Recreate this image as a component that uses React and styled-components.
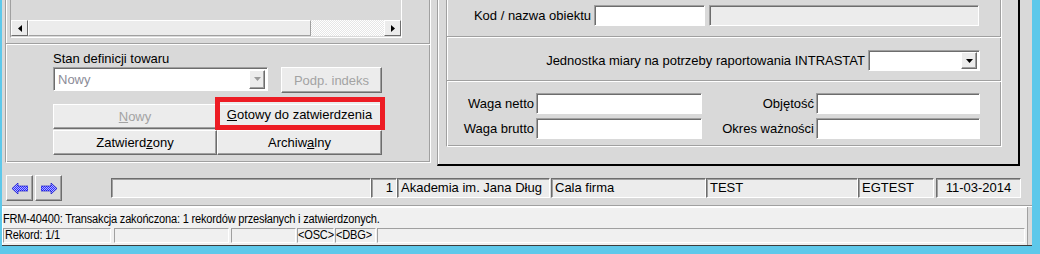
import styled, { createGlobalStyle } from "styled-components";

const GlobalStyle = createGlobalStyle`
  html, body { margin: 0; padding: 0; background: #5ec8ea; }
  body { font-family: "Liberation Sans", Arial, sans-serif; color: #000; }
`;

const Screen = styled.div`
  width: 1040px;
  height: 254px;
  background: #5ec8ea;
  padding-left: 2px;
  box-sizing: border-box;
  overflow: hidden;
`;

const Win = styled.div`
  width: 1030px;
  height: 246px;
  background: #d9d9d9;
  border-bottom: 1px solid #3c3c3c;
  box-sizing: border-box;
  display: flex;
  flex-direction: column;
`;

const Main = styled.div`
  display: flex;
  height: 166px;
  padding-left: 3px;
`;

/* ---------- left panel ---------- */

const LeftPanel = styled.div`
  width: 426px;
  height: 163px;
  box-sizing: border-box;
  border-left: 1px solid #a0a0a0;
  border-right: 1px solid #fff;
  border-bottom: 1px solid #fff;
  box-shadow: inset 1px 0 #fff, inset -1px -1px #a0a0a0;
  display: flex;
  flex-direction: column;
`;

const ListBox = styled.div`
  margin-left: 4px;
  width: 392px;
  height: 38px;
  box-sizing: border-box;
  border-left: 1px solid #a0a0a0;
  border-right: 1px solid #fff;
  border-bottom: 1px solid #fff;
  display: flex;
  flex-direction: column;
  justify-content: flex-end;
`;

const HScroll = styled.div`
  display: flex;
  height: 16px;
  margin-bottom: 1px;
`;

const ScrollBtn = styled.div`
  width: 17px;
  height: 16px;
  box-sizing: border-box;
  background: #ececec;
  border: 1px solid;
  border-color: #fff #6d6d6d #6d6d6d #fff;
  display: flex;
  align-items: center;
  justify-content: center;
`;

const Thumb = styled.div`
  width: 283px;
  box-sizing: border-box;
  background: #ececec;
  border: 1px solid;
  border-color: #fff #a0a0a0 #a0a0a0 #fff;
`;

const Track = styled.div`
  flex: 1;
  background: repeating-conic-gradient(#ffffff 0 25%, #e6e6e6 0 50%) 0 0 / 2px 2px;
`;

const Groove = styled.div`
  margin-top: ${(p) => p.top || 0}px;
  border-top: 1px solid #a0a0a0;
  border-bottom: 1px solid #fff;
`;

const FormArea = styled.div`
  padding: 6px 0 0 47px;
  display: flex;
  flex-direction: column;
`;

const Label = styled.div`
  font-size: 13px;
  line-height: 15px;
  white-space: nowrap;
  text-align: ${(p) => p.align || "left"};
`;

const SelectRow = styled.div`
  display: flex;
  align-items: flex-start;
  margin-top: 1px;
  gap: 13px;
`;

const Field = styled.div`
  width: ${(p) => p.w}px;
  height: ${(p) => p.h || 21}px;
  box-sizing: border-box;
  background: ${(p) => (p.gray ? "#ececec" : "#fff")};
  border: 1px solid;
  border-color: #a0a0a0 #fff #fff #a0a0a0;
  box-shadow: inset 1px 1px #6d6d6d;
  display: flex;
  align-items: center;
  justify-content: space-between;
  padding: 1px 2px 1px 4px;
  font-size: 13px;
  color: ${(p) => (p.dim ? "#8c8c98" : "#000")};
`;

const DropBtn = styled.div`
  width: 16px;
  height: ${(p) => p.h || 17}px;
  box-sizing: border-box;
  background: #ececec;
  border: 1px solid;
  border-color: #fff #6d6d6d #6d6d6d #fff;
  box-shadow: inset -1px -1px #a0a0a0;
  display: flex;
  align-items: center;
  justify-content: center;
`;

const Button = styled.div`
  width: ${(p) => p.w}px;
  height: ${(p) => p.h || 25}px;
  box-sizing: border-box;
  background: #ececec;
  border: 1px solid;
  border-color: #fff #6d6d6d #6d6d6d #fff;
  box-shadow: inset -1px -1px #a0a0a0;
  display: flex;
  align-items: center;
  justify-content: center;
  padding-bottom: ${(p) => p.pb || 0}px;
  font-size: 13px;
  color: ${(p) => (p.disabled ? "#a3a3a3" : "#000")};
  white-space: nowrap;
  u { text-decoration: underline; text-underline-offset: 1px; }
`;

const ButtonGrid = styled.div`
  display: grid;
  grid-template-columns: 164px 165px;
  grid-auto-rows: 25px;
  row-gap: 1px;
  margin-top: 11px;
`;

const HighlightWrap = styled.div`
  position: relative;
`;

/* red marker frame drawn over the button */
const Highlight = styled.div`
  position: absolute;
  left: -2px;
  right: -3px;
  top: -7px;
  bottom: -1px;
  border: 5px solid #ed1c24;
  box-shadow: inset 0 2px #ececec;
  pointer-events: none;
`;

/* ---------- right panel ---------- */

const RightPanel = styled.div`
  margin-left: 6px;
  width: 583px;
  height: 166px;
  box-sizing: border-box;
  border-left: 1px solid #a0a0a0;
  border-right: 2px solid #000;
  border-bottom: 2px solid #000;
  box-shadow: inset 1px 0 #fff;
  padding-left: 8px;
`;

const InnerFrame = styled.div`
  width: 556px;
  height: 147px;
  box-sizing: border-box;
  border-left: 1px solid #a0a0a0;
  border-right: 1px solid #fff;
  border-bottom: 1px solid #fff;
  box-shadow: inset 1px 0 #fff, inset -1px -1px #a0a0a0;
  display: flex;
  flex-direction: column;
`;

const Section = styled.div`
  height: ${(p) => p.h}px;
  box-sizing: border-box;
  padding: ${(p) => p.pt}px ${(p) => p.pr || 0}px 0 0;
  display: flex;
  justify-content: ${(p) => p.justify || "flex-end"};
  align-items: flex-start;
  border-bottom: ${(p) => (p.last ? "none" : "1px solid #fff")};
  box-shadow: ${(p) => (p.last ? "none" : "inset 0 -1px #a0a0a0")};
`;

const LabelRow = styled.div`
  display: flex;
  align-items: center;
  gap: ${(p) => p.gap || 2}px;
`;

const WeightGrid = styled.div`
  display: grid;
  grid-template-columns: 87px 166px 110px 164px;
  grid-auto-rows: 21px;
  row-gap: 4px;
  column-gap: 2px;
  align-items: center;
`;

/* ---------- toolbar ---------- */

const Toolbar = styled.div`
  height: 41px;
  box-sizing: border-box;
  border-bottom: 1px solid #fff;
  box-shadow: inset 0 -1px #a0a0a0;
  display: flex;
  align-items: center;
  padding: 4px 0 0 4px;
`;

const NavBtn = styled.div`
  width: 27px;
  height: 26px;
  box-sizing: border-box;
  background: #d9d9d9;
  border: 1px solid;
  border-color: #fff #6d6d6d #6d6d6d #fff;
  box-shadow: inset -1px -1px #a0a0a0;
  display: flex;
  align-items: center;
  justify-content: center;
  margin-right: 2px;
`;

const InfoBox = styled.div`
  width: ${(p) => p.w}px;
  height: 20px;
  margin-left: ${(p) => p.ml || 0}px;
  box-sizing: border-box;
  background: #ececec;
  border: 1px solid;
  border-color: #6d6d6d #fff #fff #6d6d6d;
  box-shadow: inset 1px 1px #a0a0a0;
  font-size: 13px;
  line-height: 18px;
  padding: 0 3px;
  white-space: nowrap;
  overflow: hidden;
  text-align: ${(p) => p.align || "left"};
`;

/* ---------- status ---------- */

const Status = styled.div`
  flex: 1;
  margin-right: 4px;
  background: #f0f0f0;
  border-right: 1px solid #a0a0a0;
  box-shadow: inset 1px 1px #fff;
  display: flex;
  flex-direction: column;
  padding: 5px 0 0 1px;
  font-size: 12px;
  letter-spacing: -0.2px;
`;

/* the status bar font is a tall, condensed one */
const Narrow = styled.span`
  display: inline-block;
  transform: scaleX(0.92);
  transform-origin: left center;
  white-space: nowrap;
`;

const Message = styled.div`
  height: 16px;
  line-height: 15px;
  white-space: nowrap;
`;

const StatusRow = styled.div`
  display: flex;
  height: 15px;
`;

const StatusCell = styled.div`
  width: ${(p) => p.w}px;
  margin-right: ${(p) => p.mr || 0}px;
  box-sizing: border-box;
  border: 1px solid;
  border-color: #a0a0a0 #fff #fff #a0a0a0;
  line-height: 13px;
  padding-left: ${(p) => (p.tight ? 0 : 1)}px;
  white-space: nowrap;
`;

function Tri({ dir = "down", color = "#000" }) {
  const pts = {
    down: "0,0 7,0 3.5,4",
    left: "4,0 4,7 0,3.5",
    right: "0,0 0,7 4,3.5",
  }[dir];
  const w = dir === "down" ? 7 : 4;
  const h = dir === "down" ? 4 : 7;
  return (
    <svg width={w} height={h} viewBox={`0 0 ${w} ${h}`}>
      <polygon points={pts} fill={color} />
    </svg>
  );
}

function NavArrow({ flip }) {
  return (
    <svg width="16" height="11" viewBox="0 0 16 11" style={flip ? { transform: "scaleX(-1)" } : undefined}>
      <defs>
        <pattern id="dith" width="2" height="2" patternUnits="userSpaceOnUse">
          <rect width="2" height="2" fill="#2b2bff" />
          <rect width="1" height="1" fill="#b5b5ff" />
          <rect x="1" y="1" width="1" height="1" fill="#b5b5ff" />
        </pattern>
      </defs>
      <polygon points="0,5.5 6,0 6,3 16,3 16,8 6,8 6,11" fill="url(#dith)" />
      <polygon points="0,5.5 6,0 6,3 16,3 16,8 6,8 6,11" fill="none" stroke="#0000c8" strokeWidth="0.6" />
    </svg>
  );
}

export default function App() {
  return (
    <Screen>
      <GlobalStyle />
      <Win>
        <Main>
          <LeftPanel>
            <ListBox>
              <HScroll>
                <ScrollBtn><Tri dir="left" /></ScrollBtn>
                <Thumb />
                <Track />
                <ScrollBtn><Tri dir="right" /></ScrollBtn>
              </HScroll>
            </ListBox>
            <Groove top={5} />
            <FormArea>
              <Label>Stan definicji towaru</Label>
              <SelectRow>
                <Field w={215} h={24} dim>
                  Nowy
                  <DropBtn h={19}><Tri color="#9a9a9a" /></DropBtn>
                </Field>
                <Button w={101} h={26} disabled>Podp. indeks</Button>
              </SelectRow>
              <ButtonGrid>
                <Button w={164} disabled><u>N</u>owy</Button>
                <HighlightWrap>
                  <Button w={165} pb={5}><u>G</u>otowy do zatwierdzenia</Button>
                  <Highlight />
                </HighlightWrap>
                <Button w={164}>Zatwierd<u>z</u>ony</Button>
                <Button w={165}>Archiw<u>a</u>lny</Button>
              </ButtonGrid>
            </FormArea>
          </LeftPanel>

          <RightPanel>
            <InnerFrame>
              <Section h={38} pt={5} pr={22}>
                <LabelRow gap={3}>
                  <Label>Kod / nazwa obiektu</Label>
                  <Field w={111} />
                  <Field w={270} gray style={{ marginLeft: 1 }} />
                </LabelRow>
              </Section>
              <Section h={44} pt={12} pr={21}>
                <LabelRow gap={3}>
                  <Label>Jednostka miary na potrzeby raportowania INTRASTAT</Label>
                  <Field w={112}>
                    <span />
                    <DropBtn><Tri /></DropBtn>
                  </Field>
                </LabelRow>
              </Section>
              <Section h={63} pt={11} justify="flex-start" last>
                <WeightGrid>
                  <Label align="right">Waga netto</Label>
                  <Field w={166} />
                  <Label align="right">Objętość</Label>
                  <Field w={164} />
                  <Label align="right">Waga brutto</Label>
                  <Field w={166} />
                  <Label align="right">Okres ważności</Label>
                  <Field w={164} />
                </WeightGrid>
              </Section>
            </InnerFrame>
          </RightPanel>
        </Main>

        <Toolbar>
          <NavBtn><NavArrow /></NavBtn>
          <NavBtn><NavArrow flip /></NavBtn>
          <InfoBox w={260} ml={47} />
          <InfoBox w={26} align="right">1</InfoBox>
          <InfoBox w={153}>Akademia im. Jana Dług</InfoBox>
          <InfoBox w={155} ml={1}>Cala firma</InfoBox>
          <InfoBox w={152}>TEST</InfoBox>
          <InfoBox w={76}>EGTEST</InfoBox>
          <InfoBox w={85} ml={2} align="center">11-03-2014</InfoBox>
        </Toolbar>

        <Status>
          <Message>
            <Narrow>FRM-40400: Transakcja zakończona: 1 rekordów przesłanych i zatwierdzonych.</Narrow>
          </Message>
          <StatusRow>
            <StatusCell w={108} mr={3}><Narrow>Rekord: 1/1</Narrow></StatusCell>
            <StatusCell w={115} mr={2} />
            <StatusCell w={65} mr={1} />
            <StatusCell w={37} mr={1} tight><Narrow>&lt;OSC&gt;</Narrow></StatusCell>
            <StatusCell w={41} mr={1} tight><Narrow>&lt;DBG&gt;</Narrow></StatusCell>
            <StatusCell w={648} />
          </StatusRow>
        </Status>
      </Win>
    </Screen>
  );
}
